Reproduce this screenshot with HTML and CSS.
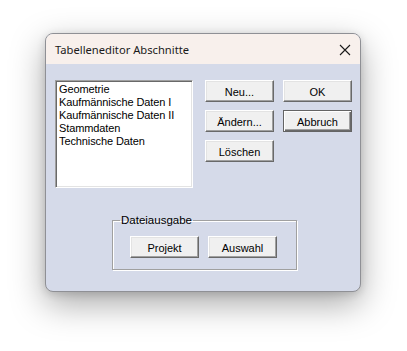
FILE: index.html
```html
<!DOCTYPE html>
<html lang="de">
<head>
    <meta charset="UTF-8">
    <title>Tabelleneditor Abschnitte</title>
    <link rel="stylesheet" href="styles.css">
</head>
<body>
    <div class="dialog">
        <div class="titlebar">
            <span class="title">Tabelleneditor Abschnitte</span>
            <svg class="close" width="12" height="12" viewBox="0 0 12 12">
                <path d="M1 1 L11 11 M11 1 L1 11" stroke="#1a1a1a" stroke-width="1.1" fill="none"/>
            </svg>
        </div>

        <div class="client">
            <div class="top-row">
                <div class="listbox">
                    <div class="item">Geometrie</div>
                    <div class="item">Kaufmännische Daten I</div>
                    <div class="item">Kaufmännische Daten II</div>
                    <div class="item">Stammdaten</div>
                    <div class="item">Technische Daten</div>
                </div>

                <div class="btn-col">
                    <button class="btn">Neu...</button>
                    <button class="btn">Ändern...</button>
                    <button class="btn">Löschen</button>
                </div>

                <div class="btn-col">
                    <button class="btn">OK</button>
                    <button class="btn btn-focus">Abbruch</button>
                </div>
            </div>

            <fieldset class="group">
                <legend>Dateiausgabe</legend>
                <div class="group-buttons">
                    <button class="btn">Projekt</button>
                    <button class="btn">Auswahl</button>
                </div>
            </fieldset>
        </div>
    </div>
</body>
</html>
```

FILE: styles.css
```css
* {
    box-sizing: border-box;
    margin: 0;
    padding: 0;
}

html {
    background-color: #ffffff;
}

body {
    min-height: 100vh;
    background-color: #ffffff;
    font-family: 'Liberation Sans', Arial, sans-serif;
    font-size: 11px;
    color: #000;
    padding: 33px 0 0 45px;
}

.dialog {
    width: 316px;
    height: 259px;
    border: 1px solid #8f9095;
    border-radius: 8px;
    overflow: hidden;
    background-color: #d5dae9;
    box-shadow: 0 12px 34px rgba(0, 0, 0, 0.34), 0 2px 8px rgba(0, 0, 0, 0.14);
}

.titlebar {
    height: 30px;
    background-color: #f8f0ec;
    display: flex;
    align-items: center;
    justify-content: space-between;
    padding: 0 9px 0 9px;
}

.title {
    font-family: 'Noto Sans', sans-serif;
    font-size: 11.2px;
    color: #1a1a1a;
    padding-top: 1px;
}

.close {
    margin-top: 1px;
}

.client {
    padding: 16px 0 0 9px;
}

.top-row {
    display: flex;
    align-items: flex-start;
}

.listbox {
    width: 138px;
    height: 108px;
    background-color: #fff;
    border: 1px solid;
    border-color: #a0a0a0 #ffffff #ffffff #a0a0a0;
    box-shadow: inset 1px 1px 0 #696969, inset -1px -1px 0 #e3e3e3;
    padding: 2px 3px;
}

.item {
    height: 13px;
    line-height: 13px;
    white-space: nowrap;
    letter-spacing: -0.1px;
}

.btn-col {
    display: flex;
    flex-direction: column;
    gap: 8px;
    margin-left: 12px;
}

.btn-col + .btn-col {
    margin-left: 9px;
}

.btn {
    width: 69px;
    height: 22px;
    font-family: 'Liberation Sans', Arial, sans-serif;
    font-size: 11px;
    color: #000;
    background-color: #f0f0f0;
    border: 1px solid;
    border-color: #ffffff #696969 #696969 #ffffff;
    box-shadow: inset -1px -1px 0 #a0a0a0, inset 1px 1px 0 #e3e3e3;
    padding-top: 1px;
}

.btn-focus {
    border-color: #646464;
    box-shadow: inset 1px 1px 0 #ffffff, inset -1px -1px 0 #696969, inset -2px -2px 0 #a0a0a0;
}

.group {
    width: 185px;
    height: 56px;
    margin: 26px 0 0 57px;
    border: 1px solid #a0a0a0;
    box-shadow: inset 1px 1px 0 #ffffff, 1px 1px 0 #ffffff;
    padding: 0;
}

.group legend {
    margin-left: 7px;
    padding: 0 1px;
    font-size: 11.5px;
    line-height: 13px;
}

.group-buttons {
    display: flex;
    gap: 9px;
    margin: 9px 0 0 17px;
}
```
